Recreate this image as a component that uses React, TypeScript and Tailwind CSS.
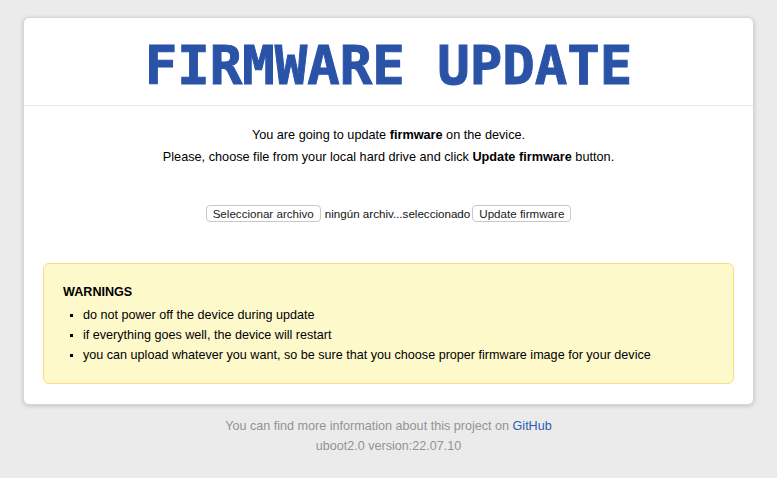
import React from 'react';

const sans = { fontFamily: '"Liberation Sans", Arial, sans-serif' };

export default function App() {
  return (
    <div className="min-h-[478px] bg-[#ebebeb] pt-[17px] pb-4 text-[#000]" style={sans}>
      <div className="mx-[23px] bg-white rounded-[6px] border border-[#d6d6d6] shadow-[0_1px_4px_rgba(0,0,0,0.18)]">
        <div className="h-[88px] border-b border-[#e6e6e6] flex items-center justify-center">
          <h1
            className="text-[54px] leading-none font-bold text-[#2a53a8] mt-[8px] [-webkit-text-stroke:1px_#2a53a8]"
            style={{ fontFamily: '"DejaVu Sans Mono", monospace' }}
          >
            FIRMWARE UPDATE
          </h1>
        </div>

        <div className="px-[19px] pt-[18px] pb-[20px]">
          <div className="text-center text-[12.7px] leading-[22px]">
            <p>You are going to update <b>firmware</b> on the device.</p>
            <p>Please, choose file from your local hard drive and click <b>Update firmware</b> button.</p>
          </div>

          <div className="mt-[37px] flex items-center justify-center text-[11.6px]">
            <button className="h-[17px] px-[6px] bg-white border border-[#c8c8c8] rounded-[4px] leading-none text-[#222]">
              Seleccionar archivo
            </button>
            <span className="ml-[4px] mr-[2px] text-[#111]">ningún archiv...seleccionado</span>
            <button className="h-[17px] px-[6px] bg-white border border-[#c8c8c8] rounded-[4px] leading-none text-[#222]">
              Update firmware
            </button>
          </div>

          <div className="mt-[41px] bg-[#fef9cb] border border-[#f7dd85] rounded-[6px] pl-[19px] pr-4 pt-[19px] pb-[18px] text-[12.6px]">
            <div className="font-bold leading-[18px]">WARNINGS</div>
            <ul className="mt-[4px] pl-[20px] list-[square] leading-[20px] marker:text-[10px]">
              <li>do not power off the device during update</li>
              <li>if everything goes well, the device will restart</li>
              <li>you can upload whatever you want, so be sure that you choose proper firmware image for your device</li>
            </ul>
          </div>
        </div>
      </div>

      <div className="mt-[11px] text-center text-[12.6px] leading-[20px] text-[#939393]">
        <p>
          You can find more information about this project on <a className="text-[#2a5db0]">GitHub</a>
        </p>
        <p>uboot2.0 version:22.07.10</p>
      </div>
    </div>
  );
}
